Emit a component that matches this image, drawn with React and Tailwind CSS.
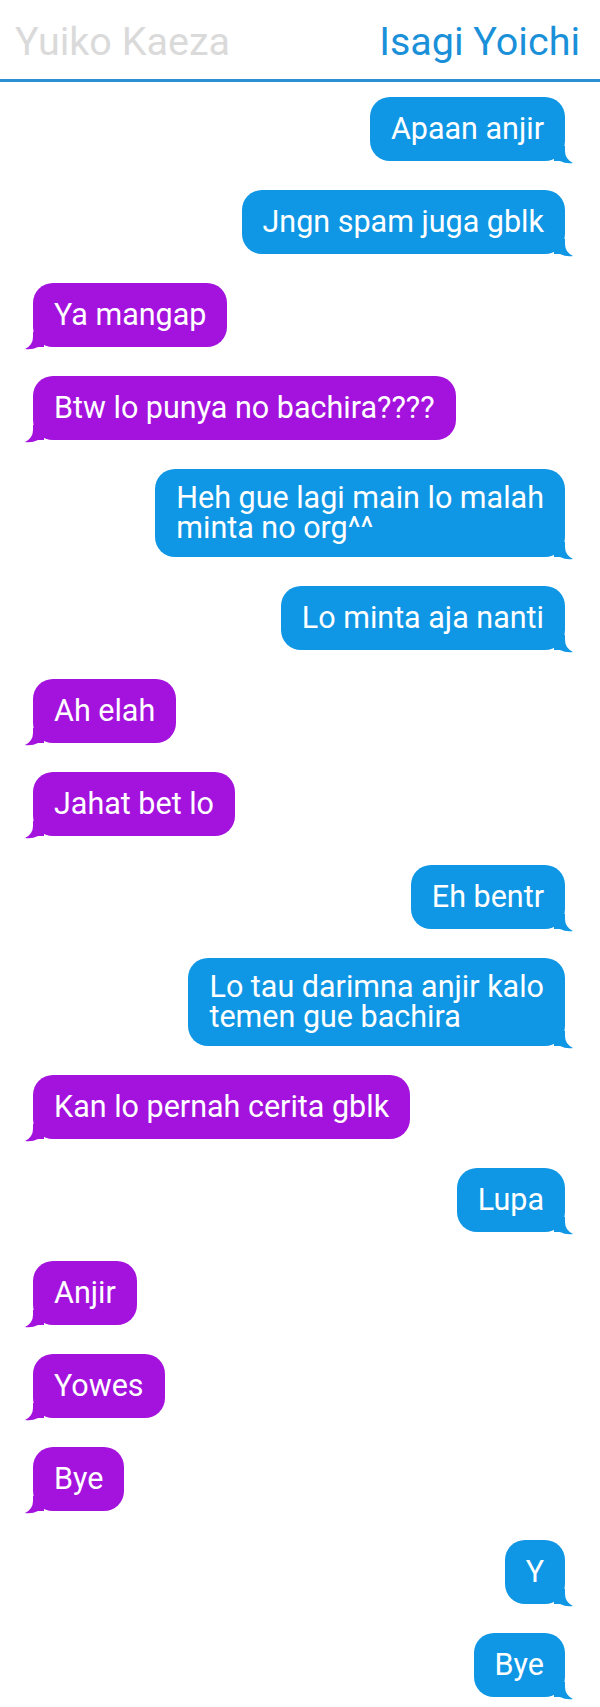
const messages = [
  { me: true, text: "Apaan anjir" },
  { me: true, text: "Jngn spam juga gblk" },
  { me: false, text: "Ya mangap" },
  { me: false, text: "Btw lo punya no bachira????" },
  { me: true, text: "Heh gue lagi main lo malah\nminta no org^^" },
  { me: true, text: "Lo minta aja nanti" },
  { me: false, text: "Ah elah" },
  { me: false, text: "Jahat bet lo" },
  { me: true, text: "Eh bentr" },
  { me: true, text: "Lo tau darimna anjir kalo\ntemen gue bachira" },
  { me: false, text: "Kan lo pernah cerita gblk" },
  { me: true, text: "Lupa" },
  { me: false, text: "Anjir" },
  { me: false, text: "Yowes" },
  { me: false, text: "Bye" },
  { me: true, text: "Y" },
  { me: true, text: "Bye" },
];

// little curl under the bubble corner
const Tail = ({ me }) => (
  <svg
    viewBox="0 0 20 18"
    className={
      me
        ? "absolute right-[-9px] bottom-[-3px] w-[20px] h-[18px] fill-[#0f97e5]"
        : "absolute left-[-9px] bottom-[-3px] w-[20px] h-[18px] fill-[#a412dd] -scale-x-100"
    }
  >
    <path d="M0 0 H11 V5 Q11 13 19 17 Q12 18 6 15 H0 Z" />
  </svg>
);

const Bubble = ({ me, text }) => (
  <div className={me ? "flex justify-end pr-[35px]" : "flex justify-start pl-[33px]"}>
    <div
      className={
        "relative flex items-center min-h-[64px] rounded-[20px] px-[21px] py-[14px] text-[30.5px] leading-[30px] text-white whitespace-pre-line " +
        (me ? "bg-[#0f97e5]" : "bg-[#a412dd]")
      }
    >
      {text}
      <Tail me={me} />
    </div>
  </div>
);

export default function App() {
  return (
    <div className="w-[600px] min-h-[1707px] bg-white font-['Roboto',sans-serif]">
      <div className="h-[79px] flex items-center justify-between pl-[15px] pr-[20px] text-[39.5px] pt-[4px]">
        <span className="text-[#dadada]">Yuiko Kaeza</span>
        <span className="text-[#1a90d9]">Isagi Yoichi</span>
      </div>
      <div className="h-[3px] bg-[#2a90d2]" />
      <div className="flex flex-col gap-[29px] pt-[15px] pb-[7px]">
        {messages.map((m, i) => (
          <Bubble key={i} me={m.me} text={m.text} />
        ))}
      </div>
    </div>
  );
}
